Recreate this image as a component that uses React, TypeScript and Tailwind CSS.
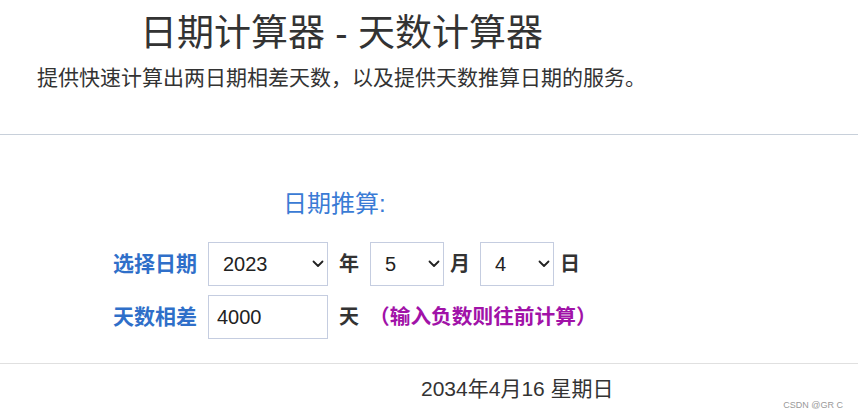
import { useState } from "react";

const font = "font-['Liberation_Sans','Noto_Sans_CJK_SC',sans-serif]";

function Chevron() {
  return (
    <svg width="12" height="8" viewBox="0 0 12 8" className="pointer-events-none absolute right-[4px] top-1/2 -translate-y-1/2">
      <path d="M1.5 1.5 L6 6 L10.5 1.5" fill="none" stroke="#222" strokeWidth="1.8" strokeLinecap="round" strokeLinejoin="round" />
    </svg>
  );
}

function Select({ value, options, width, onChange }: { value: string; options: string[]; width: string; onChange: (v: string) => void }) {
  return (
    <div className={`relative h-[44px] ${width}`}>
      <select
        value={value}
        onChange={(e) => onChange(e.target.value)}
        className={`h-full w-full appearance-none border border-[#c5cde0] bg-white pl-[14px] text-[20px] text-[#222] outline-none ${font}`}
      >
        {options.map((o) => (
          <option key={o} value={o}>{o}</option>
        ))}
      </select>
      <Chevron />
    </div>
  );
}

const weekdays = ["星期日", "星期一", "星期二", "星期三", "星期四", "星期五", "星期六"];

export default function App() {
  const [year, setYear] = useState("2023");
  const [month, setMonth] = useState("5");
  const [day, setDay] = useState("4");
  const [diff, setDiff] = useState("4000");

  const years = Array.from({ length: 51 }, (_, i) => String(2000 + i));
  const months = Array.from({ length: 12 }, (_, i) => String(i + 1));
  const days = Array.from({ length: 31 }, (_, i) => String(i + 1));

  const d = new Date(Number(year), Number(month) - 1, Number(day) + (parseInt(diff) || 0));
  const result = `${d.getFullYear()}年${d.getMonth() + 1}月${d.getDate()} ${weekdays[d.getDay()]}`;

  return (
    <div className={`relative min-h-[418px] w-full bg-white text-[#333] ${font}`}>
      {/* header */}
      <div className="pt-[12px]">
        <h1 className="pl-[140px] text-[37px] leading-[44px] font-normal text-[#333]">日期计算器 - 天数计算器</h1>
        <p className="mt-[7px] pl-[37px] text-[21px] leading-[30px] text-[#333]">
          提供快速计算出两日期相差天数，以及提供天数推算日期的服务。
        </p>
      </div>

      <hr className="mt-[41px] border-0 border-t border-[#c8d0da]" />

      {/* form */}
      <div className="pt-[52px]">
        <h2 className="pl-[283px] text-[24px] leading-[34px] text-[#3a7bd5]">日期推算:</h2>

        <div className="mt-[21px] flex flex-col gap-[9px] pl-[113px]">
          <div className="flex items-center">
            <span className="w-[95px] text-[21px] font-bold text-[#2f6fc9]">选择日期</span>
            <Select value={year} options={years} width="w-[120px]" onChange={setYear} />
            <span className="mx-[11px] text-[20px] font-bold text-[#333]">年</span>
            <Select value={month} options={months} width="w-[74px]" onChange={setMonth} />
            <span className="ml-[6px] mr-[10px] text-[20px] font-bold text-[#333]">月</span>
            <Select value={day} options={days} width="w-[74px]" onChange={setDay} />
            <span className="ml-[6px] text-[20px] font-bold text-[#333]">日</span>
          </div>

          <div className="flex items-center">
            <span className="w-[95px] text-[21px] font-bold text-[#2f6fc9]">天数相差</span>
            <input
              value={diff}
              onChange={(e) => setDiff(e.target.value)}
              className={`h-[44px] w-[120px] border border-[#c5cde0] px-[8px] text-[20px] text-[#222] outline-none ${font}`}
            />
            <span className="ml-[11px] text-[20px] font-bold text-[#333]">天</span>
            <span className="ml-[10px] text-[20.7px] font-bold text-[#a112a8]">（输入负数则往前计算）</span>
          </div>
        </div>
      </div>

      <hr className="mt-[24px] border-0 border-t border-[#e0e0e0]" />

      <div className="pt-[10px] pl-[421px] text-[21px] leading-[30px] text-[#333]">{result}</div>

      <span className="absolute right-[15px] top-[399px] text-[9px] text-[#999]">CSDN @GR C</span>
    </div>
  );
}
